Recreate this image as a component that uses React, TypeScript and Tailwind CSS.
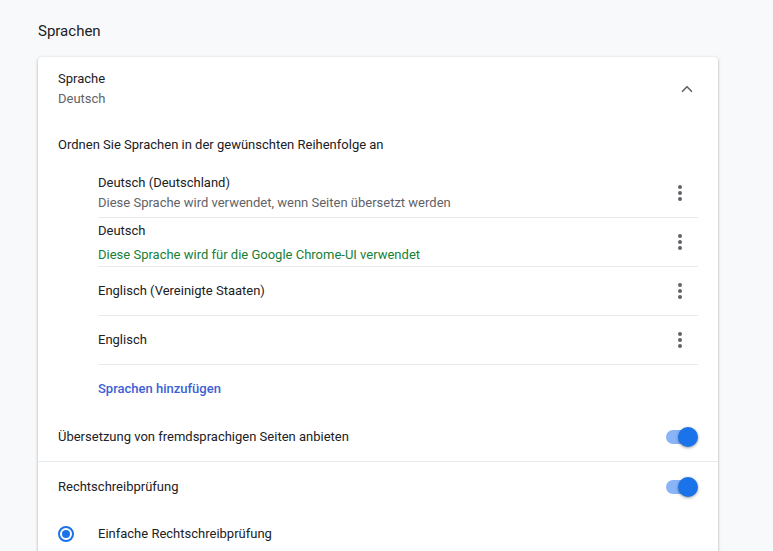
import { ChevronUp } from "lucide-react";

const languages = [
  { name: "Deutsch (Deutschland)", note: "Diese Sprache wird verwendet, wenn Seiten übersetzt werden", tone: "gray" },
  { name: "Deutsch", note: "Diese Sprache wird für die Google Chrome-UI verwendet", tone: "green" },
  { name: "Englisch (Vereinigte Staaten)", note: "", tone: "" },
  { name: "Englisch", note: "", tone: "" },
];

const MoreDots = () => (
  <div className="flex flex-col items-center gap-[2px] w-5">
    <span className="w-[4px] h-[4px] rounded-full bg-[#5f6368]" />
    <span className="w-[4px] h-[4px] rounded-full bg-[#5f6368]" />
    <span className="w-[4px] h-[4px] rounded-full bg-[#5f6368]" />
  </div>
);

const Toggle = () => (
  <div className="relative w-[32px] h-[20px] flex items-center">
    <div className="w-[30px] h-[14px] rounded-full bg-[#8ab4f8]" />
    <div className="absolute right-0 top-0 w-[20px] h-[20px] rounded-full bg-[#1a73e8] shadow-[0_1px_3px_rgba(0,0,0,0.4)]" />
  </div>
);

export default function App() {
  return (
    <div className="min-h-[551px] bg-[#f8f9fa] font-['Roboto',sans-serif] text-[13px] text-[#202124]">
      <div className="pl-[38px] pr-[55px]">
        <h2 className="h-[57px] flex items-center text-[15px] pt-[6px] font-normal">Sprachen</h2>

        <div className="bg-white rounded-t-[4px] shadow-[0_1px_2px_rgba(60,64,67,0.3),0_1px_3px_1px_rgba(60,64,67,0.12)]">
          {/* Header */}
          <div className="h-[64px] flex items-center pl-[20px] pr-[22px]">
            <div className="flex-1">
              <div className="leading-[20px]">Sprache</div>
              <div className="leading-[20px] text-[#5f6368]">Deutsch</div>
            </div>
            <ChevronUp size={18} strokeWidth={2.2} className="text-[#5f6368]" />
          </div>

          <div className="h-[48px] flex items-center pl-[20px]">
            Ordnen Sie Sprachen in der gewünschten Reihenfolge an
          </div>

          {/* Language list */}
          <div className="ml-[60px] mr-[20px]">
            {languages.map((lang, i) => (
              <div key={lang.name} className="h-[49px] flex items-center border-b border-[#e8eaed]">
                <div className="flex-1">
                  {lang.note ? (
                    <>
                      <div className={i === 1 ? "leading-[24px] mt-[1px]" : "leading-[20px] mt-[-1px]"}>{lang.name}</div>
                      <div
                        className={
                          lang.tone === "green"
                            ? "leading-[24px] text-[#188038]"
                            : "leading-[20px] text-[#5f6368]"
                        }
                      >
                        {lang.note}
                      </div>
                    </>
                  ) : (
                    <div>{lang.name}</div>
                  )}
                </div>
                <div className="pr-[8px]">
                  <MoreDots />
                </div>
              </div>
            ))}
          </div>

          <div className="h-[48px] flex items-center pl-[60px]">
            <span className="font-medium text-[#3c5fd6]">Sprachen hinzufügen</span>
          </div>

          <div className="h-[49px] flex items-center pl-[20px] pr-[20px] border-b border-[#e8eaed]">
            <div className="flex-1">Übersetzung von fremdsprachigen Seiten anbieten</div>
            <Toggle />
          </div>

          <div className="h-[49px] flex items-center pl-[20px] pr-[20px]">
            <div className="flex-1">Rechtschreibprüfung</div>
            <Toggle />
          </div>

          <div className="h-[46px] flex items-center pl-[20px]">
            <div className="w-[16px] h-[16px] rounded-full border-2 border-[#1a73e8] flex items-center justify-center">
              <div className="w-[8px] h-[8px] rounded-full bg-[#1a73e8]" />
            </div>
            <div className="ml-[24px]">Einfache Rechtschreibprüfung</div>
          </div>
        </div>
      </div>
    </div>
  );
}
